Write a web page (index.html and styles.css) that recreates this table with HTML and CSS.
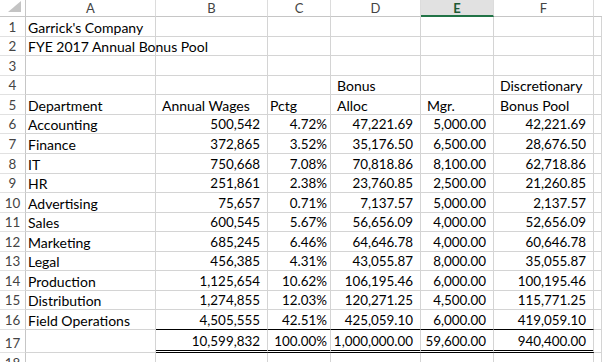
FILE: index.html
```html
<!DOCTYPE html>
<html>
<head>
<meta charset="utf-8">
<link rel="stylesheet" href="styles.css">
</head>
<body>
<div class="sheet">
  <div class="corner"><svg width="14" height="12" viewBox="0 0 14 12"><polygon points="13,0 13,11 0,11" fill="#c4c4c4"/></svg></div>
  <div class="ch">A</div><div class="ch">B</div><div class="ch">C</div><div class="ch">D</div><div class="ch sel">E</div><div class="ch">F</div><div class="ch g"></div>

  <div class="rh">1</div><div class="c t">Garrick's Company</div><div class="c"></div><div class="c"></div><div class="c"></div><div class="c"></div><div class="c"></div><div class="c"></div>
  <div class="rh">2</div><div class="c t">FYE 2017 Annual Bonus Pool</div><div class="c"></div><div class="c"></div><div class="c"></div><div class="c"></div><div class="c"></div><div class="c"></div>
  <div class="rh">3</div><div class="c"></div><div class="c"></div><div class="c"></div><div class="c"></div><div class="c"></div><div class="c"></div><div class="c"></div>
  <div class="rh">4</div><div class="c"></div><div class="c"></div><div class="c"></div><div class="c hd">Bonus</div><div class="c"></div><div class="c hd">Discretionary</div><div class="c"></div>
  <div class="rh">5</div><div class="c t">Department</div><div class="c hd">Annual Wages</div><div class="c t">Pctg</div><div class="c hd">Alloc</div><div class="c hd">Mgr.</div><div class="c hd">Bonus Pool</div><div class="c"></div>

  <div class="rh">6</div><div class="c t">Accounting</div><div class="c n">500,542</div><div class="c p">4.72%</div><div class="c n">47,221.69</div><div class="c n">5,000.00</div><div class="c n">42,221.69</div><div class="c"></div>
  <div class="rh">7</div><div class="c t">Finance</div><div class="c n">372,865</div><div class="c p">3.52%</div><div class="c n">35,176.50</div><div class="c n">6,500.00</div><div class="c n">28,676.50</div><div class="c"></div>
  <div class="rh">8</div><div class="c t">IT</div><div class="c n">750,668</div><div class="c p">7.08%</div><div class="c n">70,818.86</div><div class="c n">8,100.00</div><div class="c n">62,718.86</div><div class="c"></div>
  <div class="rh">9</div><div class="c t">HR</div><div class="c n">251,861</div><div class="c p">2.38%</div><div class="c n">23,760.85</div><div class="c n">2,500.00</div><div class="c n">21,260.85</div><div class="c"></div>
  <div class="rh">10</div><div class="c t">Advertising</div><div class="c n">75,657</div><div class="c p">0.71%</div><div class="c n">7,137.57</div><div class="c n">5,000.00</div><div class="c n">2,137.57</div><div class="c"></div>
  <div class="rh">11</div><div class="c t">Sales</div><div class="c n">600,545</div><div class="c p">5.67%</div><div class="c n">56,656.09</div><div class="c n">4,000.00</div><div class="c n">52,656.09</div><div class="c"></div>
  <div class="rh">12</div><div class="c t">Marketing</div><div class="c n">685,245</div><div class="c p">6.46%</div><div class="c n">64,646.78</div><div class="c n">4,000.00</div><div class="c n">60,646.78</div><div class="c"></div>
  <div class="rh">13</div><div class="c t">Legal</div><div class="c n">456,385</div><div class="c p">4.31%</div><div class="c n">43,055.87</div><div class="c n">8,000.00</div><div class="c n">35,055.87</div><div class="c"></div>
  <div class="rh">14</div><div class="c t">Production</div><div class="c n">1,125,654</div><div class="c p">10.62%</div><div class="c n">106,195.46</div><div class="c n">6,000.00</div><div class="c n">100,195.46</div><div class="c"></div>
  <div class="rh">15</div><div class="c t">Distribution</div><div class="c n">1,274,855</div><div class="c p">12.03%</div><div class="c n">120,271.25</div><div class="c n">4,500.00</div><div class="c n">115,771.25</div><div class="c"></div>
  <div class="rh">16</div><div class="c t">Field Operations</div><div class="c n sub">4,505,555</div><div class="c p sub">42.51%</div><div class="c n sub">425,059.10</div><div class="c n sub">6,000.00</div><div class="c n sub">419,059.10</div><div class="c"></div>
  <div class="rh">17</div><div class="c"></div><div class="c n tot">10,599,832</div><div class="c p tot">100.00%</div><div class="c n tot">1,000,000.00</div><div class="c n tot">59,600.00</div><div class="c n tot">940,400.00</div><div class="c"></div>
  <div class="rh">18</div><div class="c"></div><div class="c"></div><div class="c"></div><div class="c"></div><div class="c"></div><div class="c"></div><div class="c"></div>
</div>
</body>
</html>
```
FILE: styles.css
```css
html, body {
  margin: 0;
  padding: 0;
  background: #fff;
  overflow: hidden;
}

.sheet {
  display: grid;
  grid-template-columns: 26px 130px 112px 63px 90px 73px 100px 8px;
  grid-template-rows: 17px repeat(16, 19.5625px) 22.5px 20px;
  width: 602px;
  font-family: "Lato", "Open Sans", sans-serif;
  font-size: 14px;
  color: #000;
}

.corner {
  box-sizing: border-box;
  border-right: 1px solid #c6c6c6;
  border-bottom: 1px solid #c6c6c6;
  display: flex;
  align-items: flex-end;
  justify-content: flex-end;
  padding: 0 3px 3px 0;
}

.corner svg {
  display: block;
}

.ch {
  box-sizing: border-box;
  border-right: 1px solid #dcdcdc;
  border-bottom: 1px solid #c6c6c6;
  display: flex;
  align-items: center;
  justify-content: center;
  font-size: 13px;
  color: #444;
  line-height: 16px;
}

.ch.sel {
  background: #e1e1e1;
  border-bottom: 2px solid #217346;
  color: #1d5a34;
  font-weight: bold;
  padding-top: 1px;
}

.ch.g {
  border-right: none;
}

.rh {
  box-sizing: border-box;
  border-right: 1px solid #c6c6c6;
  border-bottom: 1px solid #e1e1e1;
  display: flex;
  align-items: flex-end;
  justify-content: center;
  font-size: 13.4px;
  color: #444;
  line-height: 15px;
  padding-bottom: 1px;
}

.c {
  box-sizing: border-box;
  border-right: 1px solid #d4d4d4;
  border-bottom: 1px solid #d4d4d4;
  display: flex;
  align-items: flex-end;
  white-space: nowrap;
  line-height: 15px;
  padding-bottom: 1px;
  min-width: 0;
}

.c.t {
  padding-left: 2px;
  z-index: 1;
}

.c.hd {
  padding-left: 6px;
}

.c.n {
  justify-content: flex-end;
  padding-right: 7px;
  font-size: 13.4px;
}

.c.p {
  justify-content: flex-end;
  padding-right: 3px;
  font-size: 13.4px;
}

.c.sub {
  border-bottom-color: #000;
}

.c.tot {
  border-bottom: 3px double #000;
}
```
